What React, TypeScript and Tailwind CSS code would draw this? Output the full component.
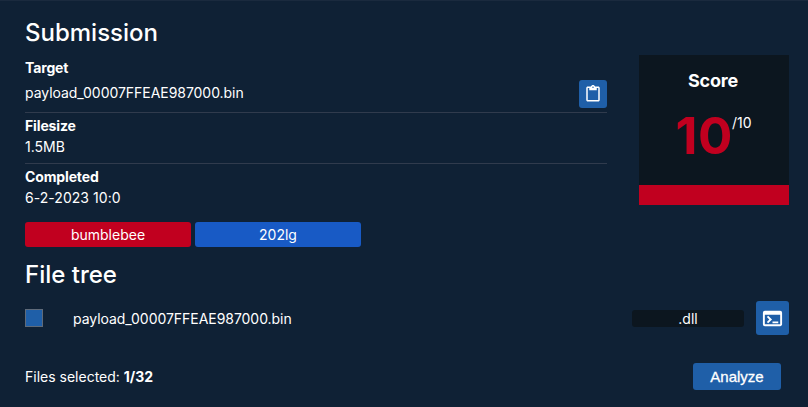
import { MdContentPaste, MdTerminal } from "react-icons/md";

function Tag({ label, color }: { label: string; color: string }) {
  return (
    <span className={`flex h-[25px] w-[166px] items-center justify-center rounded-[3px] ${color}`}>{label}</span>
  );
}

export default function App() {
  return (
    <div className="h-[407px] w-[808px] overflow-hidden border-t border-[#1a2a3e] bg-[#0f2135] pl-[25px] font-['Inter',sans-serif] text-[14px] leading-[21px] text-white">
      <div className="flex">
        <div className="w-[582px]">
          <h2 className="mt-[14px] text-[24px] leading-[36px] font-medium">Submission</h2>
          <div className="mt-[6px] h-[56px] border-b border-[#303b4d]">
            <div className="flex justify-between">
              <div>
                <div className="font-bold tracking-[-0.01em]">Target</div>
                <div className="mt-[4px] tracking-[-0.003em]">payload_00007FFEAE987000.bin</div>
              </div>
              <button className="mt-[23px] flex size-[28px] items-center justify-center rounded-[3px] bg-[#1f5fa8]">
                <MdContentPaste size={18} />
              </button>
            </div>
          </div>
          <div className="h-[51px] border-b border-[#303b4d] pt-[2px]">
            <div className="font-bold tracking-[-0.01em]">Filesize</div>
            <div>1.5MB</div>
          </div>
          <div className="pt-[2px]">
            <div className="font-bold tracking-[-0.01em]">Completed</div>
            <div className="tracking-[0.003em]">6-2-2023 10:0</div>
          </div>
        </div>
        <div className="mt-[54px] ml-[32px] flex h-[150px] w-[150px] flex-col items-center bg-[#0c161f]">
          <div className="mt-[12px] mr-[2px] text-[18px] leading-[27px] font-bold tracking-[-0.01em]">Score</div>
          <div className="mt-[16px] mr-px flex">
            <span className="text-[51px] leading-[52px] font-bold tracking-[0.01em] text-[#c1001f]">10</span>
            <span className="mt-[2px] -ml-px">/10</span>
          </div>
          <div className="mt-auto h-[20px] w-full bg-[#c1001f]" />
        </div>
      </div>
      <div className="mt-[14px] flex gap-[4px]">
        <Tag label="bumblebee" color="bg-[#c1001f]" />
        <Tag label="202lg" color="bg-[#185ac5]" />
      </div>
      <h2 className="mt-[10px] text-[24px] leading-[36px] font-medium">File tree</h2>
      <div className="mt-[8px] flex h-[34px] items-center">
        <span className="size-[18px] border border-[#5f6b7a] bg-[#1f5fa8]" />
        <span className="ml-[30px] tracking-[-0.003em]">payload_00007FFEAE987000.bin</span>
        <span className="mr-[12px] ml-auto flex h-[17px] w-[112px] items-center justify-center rounded-[3px] bg-[#0c161f]">.dll</span>
        <button className="mr-[19px] flex h-[34px] w-[33px] items-center justify-center rounded-[3px] bg-[#1f5fa8]">
          <MdTerminal size={23} />
        </button>
      </div>
      <div className="mt-[28px] flex items-center justify-between">
        <span>
          Files selected: <b className="font-bold">1/32</b>
        </span>
        <button className="mr-[27px] h-[27px] w-[88px] rounded-[3px] bg-[#1f5fa8] font-['Liberation_Sans',Arial,sans-serif] text-[15px] [-webkit-text-stroke:0.3px_white]">
          Analyze
        </button>
      </div>
    </div>
  );
}
